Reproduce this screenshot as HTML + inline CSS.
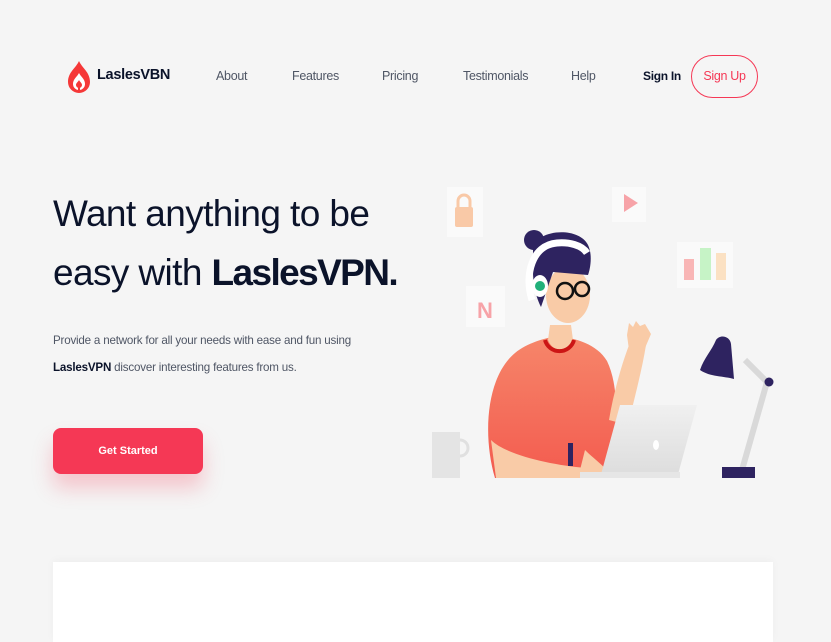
<!DOCTYPE html>
<html><head><meta charset="utf-8"><style>
*{margin:0;padding:0;box-sizing:border-box}
body{width:831px;height:624px;background:#f5f5f5;font-family:"Liberation Sans",sans-serif;position:relative;overflow:hidden}
.a{position:absolute;white-space:nowrap}
.nav{font-size:12.5px;color:#4f5665;top:69px;letter-spacing:-0.3px}
h1{position:absolute;left:53px;top:184px;font-size:37px;font-weight:400;color:#0b132a;line-height:59px;letter-spacing:-0.6px}
h1 b{font-weight:700;letter-spacing:-1.6px}
.p{left:53px;font-size:11.6px;color:#4f5665;line-height:28px;letter-spacing:-0.2px}
.btn{left:53px;top:428px;width:150px;height:46px;background:#f53855;border-radius:8px;color:#fff;font-size:11px;font-weight:700;text-align:center;line-height:46px;box-shadow:0 14px 20px rgba(245,56,85,.25)}
.su{left:691px;top:55px;width:67px;height:43px;border:1px solid #f53855;border-radius:22px;color:#f53855;font-size:12.5px;text-align:center;line-height:41px;letter-spacing:-0.3px}
.card{left:53px;top:562px;width:720px;height:80px;background:#fff;box-shadow:0 -2px 8px rgba(0,0,0,.03)}
</style></head><body>
<svg class="a" style="left:66px;top:60px" width="26" height="34" viewBox="0 0 26 34"><path d="M13 1C10 8 2 12 2 22a11 11 0 0 0 22 0C24 12 16 8 13 1z" fill="#f53838"/><path d="M13 13c-2 4-6 6-6 11a6 6 0 0 0 12 0c0-5-4-7-6-11z" fill="#fff"/><path d="M13 20c-1 2-3 3-3 5a3 3 0 0 0 6 0c0-2-2-3-3-5z" fill="#f53838"/><rect x="12" y="22" width="2" height="10" fill="#f53838"/></svg>
<div class="a" style="left:97px;top:67px;font-size:14.5px;font-weight:700;color:#0b132a;letter-spacing:-0.3px">LaslesVBN</div>
<div class="a nav" style="left:216px">About</div>
<div class="a nav" style="left:292px">Features</div>
<div class="a nav" style="left:382px">Pricing</div>
<div class="a nav" style="left:463px">Testimonials</div>
<div class="a nav" style="left:571px">Help</div>
<div class="a" style="left:643px;top:69px;font-size:12px;font-weight:700;color:#0b132a;letter-spacing:-0.3px">Sign In</div>
<div class="a su">Sign Up</div>
<h1>Want anything to be<br>easy with <b>LaslesVPN.</b></h1>
<div class="a p" style="top:327px">Provide a network for all your needs with ease and fun using</div>
<div class="a p" style="top:354px"><b style="color:#0b132a;font-weight:700">LaslesVPN</b> discover interesting features from us.</div>
<div class="a btn">Get Started</div>
<svg class="a" style="left:0;top:0" width="831" height="560" viewBox="0 0 831 560">
<defs><linearGradient id="sh" x1="0" y1="0" x2="0" y2="1"><stop offset="0" stop-color="#f6866a"/><stop offset="1" stop-color="#f35b4f"/></linearGradient>
<linearGradient id="lp" x1="0" y1="0" x2="0" y2="1"><stop offset="0" stop-color="#f0f0f0"/><stop offset="1" stop-color="#dcdcdc"/></linearGradient></defs>
<rect x="447" y="187" width="36" height="50" fill="#fafafa"/>
<rect x="455" y="207" width="18" height="20" rx="2" fill="#f9c9a7"/><path d="M458 207v-6a6 6 0 0 1 12 0v6" stroke="#f9c9a7" stroke-width="3" fill="none"/>
<rect x="612" y="187" width="34" height="35" fill="#fafafa"/><path d="M624 194l14 9-14 9z" fill="#f7a3a8"/>
<rect x="677" y="242" width="56" height="46" fill="#fafafa"/>
<rect x="684" y="259" width="10" height="21" fill="#f9b6b6"/><rect x="700" y="248" width="11" height="32" fill="#c6f3c6"/><rect x="716" y="253" width="10" height="27" fill="#fbe1c3"/>
<rect x="466" y="286" width="39" height="41" fill="#fafafa"/><text x="477" y="318" font-family="Liberation Sans" font-weight="700" font-size="22" fill="#f7a3a8">N</text>
<rect x="432" y="432" width="28" height="46" fill="#e4e4e4"/><path d="M460 440a8 8 0 0 1 0 16" stroke="#e0e0e0" stroke-width="3" fill="none"/>
<path d="M495 478c-12-40-10-100 20-125 12-10 30-15 42-17 18 2 40 8 50 25 12 25 10 60 8 117z" fill="url(#sh)"/>
<path d="M609 420c5-30 14-60 22-80l15 5c-4 25-12 55-18 80z" fill="#f9cba7"/>
<path d="M627 335l2-12 4 4 3-6 4 5 5-2 6 10-6 14-16 2z" fill="#f9cba7"/>
<path d="M548 340c5 13 20 13 25 0l-2-15h-21z" fill="#f9cba7"/>
<path d="M545 340a15 15 0 0 0 29 0" stroke="#cc1515" stroke-width="4" fill="none"/>
<ellipse cx="568" cy="295" rx="22" ry="28" fill="#f9cba7"/>
<path d="M533 250c0-20 45-25 55-5 5 10 2 25 0 30l-35-3-12 35c-10-20-8-40-8-57z" fill="#2e2360"/>
<circle cx="534" cy="240" r="10" fill="#2e2360"/>
<path d="M532 300c-8-25 0-55 25-57 12-1 25 2 30 10" stroke="#fff" stroke-width="7" fill="none"/>
<ellipse cx="540" cy="286" rx="8" ry="11" fill="#fff"/><circle cx="540" cy="286" r="5" fill="#21b07a"/>
<circle cx="565" cy="291" r="8" fill="none" stroke="#111" stroke-width="2.5"/><circle cx="582" cy="289" r="7" fill="none" stroke="#111" stroke-width="2.5"/>
<path d="M491 440c15 15 60 25 95 28v10h-90z" fill="#f9cba7"/>
<path d="M585 450c8 8 22 18 28 28h-35z" fill="#f9cba7"/>
<rect x="568" y="443" width="5" height="23" fill="#2e2360"/>
<path d="M620 405h77l-20 73h-77z" fill="url(#lp)"/><rect x="580" y="472" width="100" height="6" fill="#e6e6e6"/>
<ellipse cx="656" cy="445" rx="3" ry="5" fill="#fff"/>
<path d="M745 360l22 22-25 88" stroke="#d9d9d9" stroke-width="6" fill="none"/>
<circle cx="769" cy="382" r="4.5" fill="#2e2360"/>
<path d="M700 370c4-12 12-20 16-30 4-6 14-4 15 4l3 35c-10-3-24-2-34-9z" fill="#2e2360"/>
<rect x="722" y="467" width="33" height="11" fill="#2e2360"/>
</svg>
<div class="a card"></div>
</body></html>
